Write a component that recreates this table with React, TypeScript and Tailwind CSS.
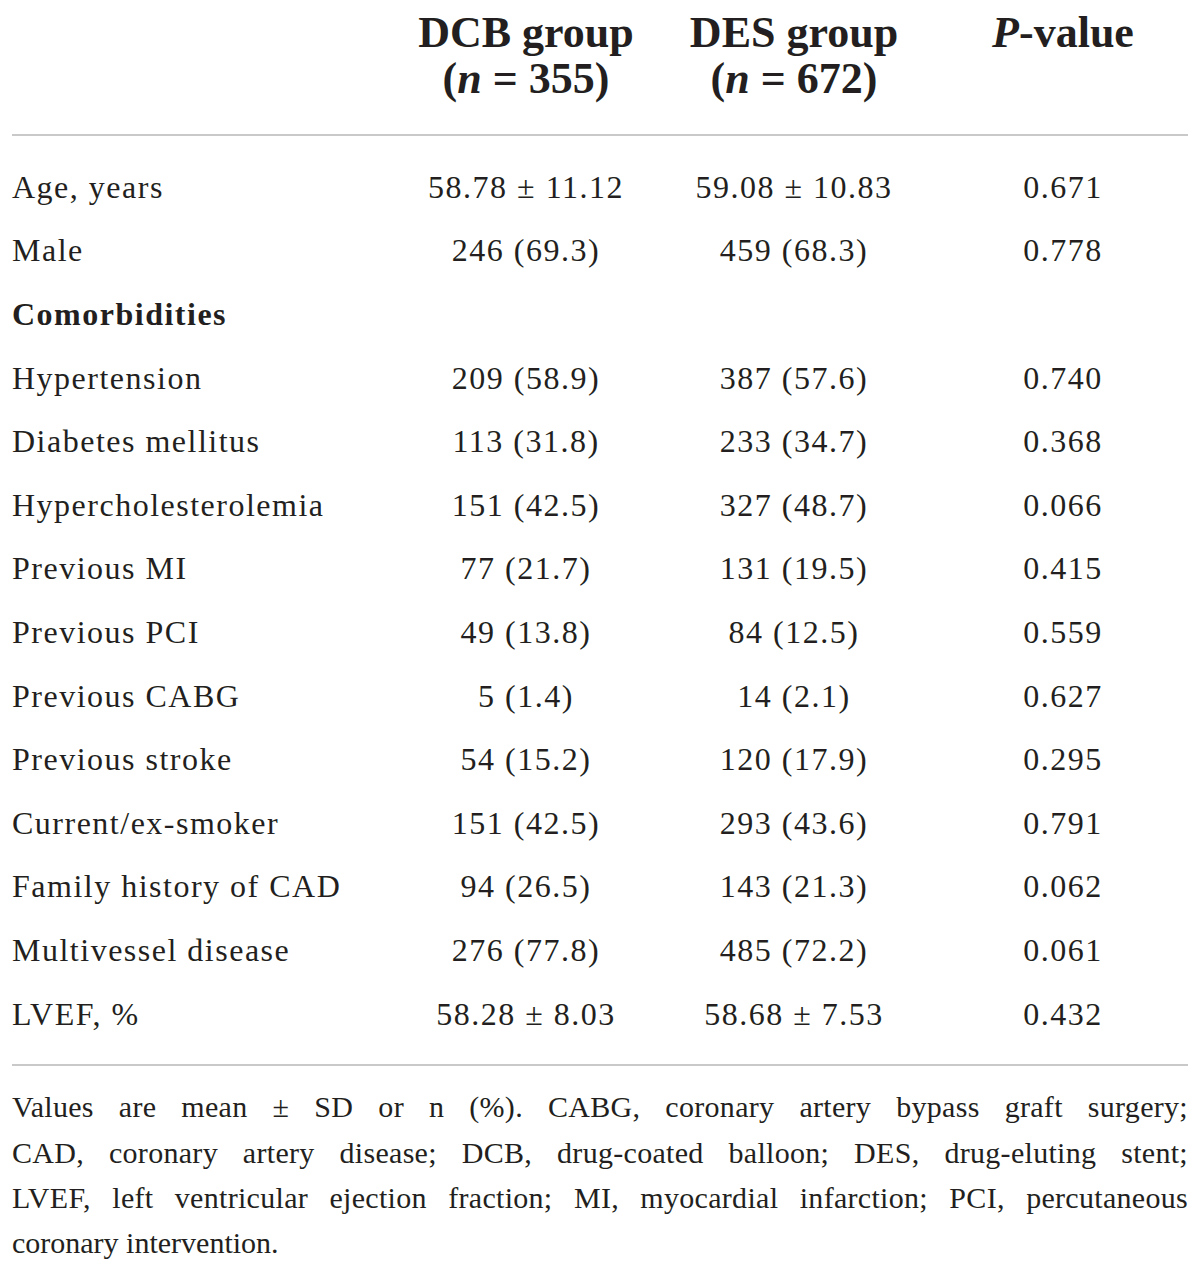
const rows: { label: string; dcb?: string; des?: string; p?: string; heading?: boolean }[] = [
  { label: "Age, years", dcb: "58.78 ± 11.12", des: "59.08 ± 10.83", p: "0.671" },
  { label: "Male", dcb: "246 (69.3)", des: "459 (68.3)", p: "0.778" },
  { label: "Comorbidities", heading: true },
  { label: "Hypertension", dcb: "209 (58.9)", des: "387 (57.6)", p: "0.740" },
  { label: "Diabetes mellitus", dcb: "113 (31.8)", des: "233 (34.7)", p: "0.368" },
  { label: "Hypercholesterolemia", dcb: "151 (42.5)", des: "327 (48.7)", p: "0.066" },
  { label: "Previous MI", dcb: "77 (21.7)", des: "131 (19.5)", p: "0.415" },
  { label: "Previous PCI", dcb: "49 (13.8)", des: "84 (12.5)", p: "0.559" },
  { label: "Previous CABG", dcb: "5 (1.4)", des: "14 (2.1)", p: "0.627" },
  { label: "Previous stroke", dcb: "54 (15.2)", des: "120 (17.9)", p: "0.295" },
  { label: "Current/ex-smoker", dcb: "151 (42.5)", des: "293 (43.6)", p: "0.791" },
  { label: "Family history of CAD", dcb: "94 (26.5)", des: "143 (21.3)", p: "0.062" },
  { label: "Multivessel disease", dcb: "276 (77.8)", des: "485 (72.2)", p: "0.061" },
  { label: "LVEF, %", dcb: "58.28 ± 8.03", des: "58.68 ± 7.53", p: "0.432" },
];

// footnote lines are split as in the print layout so every line justifies the same way
const note = [
  "Values are mean ± SD or n (%). CABG, coronary artery bypass graft surgery;",
  "CAD, coronary artery disease; DCB, drug-coated balloon; DES, drug-eluting stent;",
  "LVEF, left ventricular ejection fraction; MI, myocardial infarction; PCI, percutaneous",
];

const cols = "grid grid-cols-[380px_268px_268px_270px]";

export default function App() {
  return (
    <div className="w-[1200px] h-[1276px] bg-white text-[#231f20] font-['Liberation_Serif',serif] px-[12px]">
      {/* header */}
      <div className={`${cols} pt-[10px] h-[134px] text-[44px] leading-[46px] font-bold`}>
        <div />
        <div className="text-center">
          DCB group
          <br />(<i>n</i> = 355)
        </div>
        <div className="text-center">
          DES group
          <br />(<i>n</i> = 672)
        </div>
        <div className="text-center">
          <i>P</i>-value
        </div>
      </div>
      <div className="w-[1176px] h-[2px] bg-[#c9c9c9]" />

      {/* body */}
      <div className="pt-[19px] pb-[19px] text-[32px] leading-[48px] tracking-[1.5px]">
        {rows.map((r) => (
          <div key={r.label} className={`${cols} h-[63.6px] items-center`}>
            <div className={r.heading ? "font-bold" : ""}>{r.label}</div>
            <div className="text-center">{r.dcb}</div>
            <div className="text-center">{r.des}</div>
            <div className="text-center">{r.p}</div>
          </div>
        ))}
      </div>
      <div className="w-[1176px] h-[2px] bg-[#c9c9c9]" />

      {/* footnote */}
      <div className="w-[1176px] pt-[18px] text-[30px] leading-[45.3px] tracking-[0.3px]">
        {note.map((line) => (
          <div key={line} className="text-justify [text-align-last:justify] whitespace-nowrap">
            {line}
          </div>
        ))}
        <div className="tracking-[0px]">coronary intervention.</div>
      </div>
    </div>
  );
}
